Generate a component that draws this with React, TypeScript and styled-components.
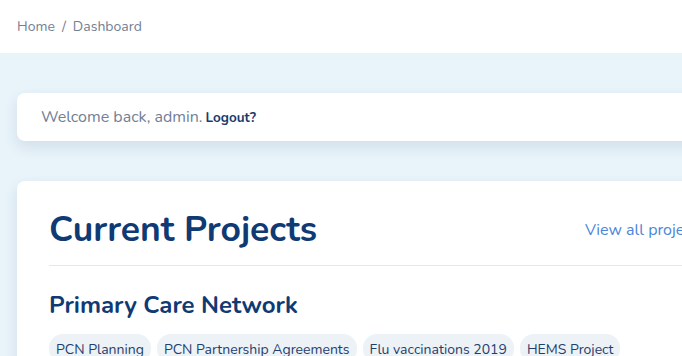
import styled, { createGlobalStyle } from 'styled-components';

const Global = createGlobalStyle`
  html, body {
    margin: 0;
    padding: 0;
    overflow: hidden;
    background: #e8f3fa;
  }
  body {
    font-family: Nunito, Lato, "Open Sans", sans-serif;
  }
`;

const Page = styled.div`
  width: 760px;
  min-height: 356px;
`;

const Header = styled.header`
  height: 53px;
  background: #ffffff;
  display: flex;
  align-items: center;
  padding: 0 17px;
  box-sizing: border-box;
`;

const Crumbs = styled.nav`
  font-size: 14px;
  color: #718096;
  display: flex;
  gap: 7px;
`;

const Main = styled.main`
  padding: 40px 17px 0;
  display: flex;
  flex-direction: column;
  gap: 40px;
`;

const Card = styled.section<{ $pad?: string }>`
  background: #ffffff;
  border-radius: 8px;
  box-shadow: 0 6px 14px rgba(60, 80, 110, 0.12);
  padding: ${(p) => p.$pad || '32px'};
`;

const Welcome = styled.div`
  font-size: 16px;
  color: #718096;
`;

const Logout = styled.a`
  font-size: 13.5px;
  font-weight: 700;
  color: #1a3a6b;
  margin-left: 3px;
`;

const TitleRow = styled.div`
  display: flex;
  justify-content: space-between;
  align-items: center;
  padding-bottom: 13px;
  border-bottom: 1px solid #e2e8f0;
`;

const Title = styled.h1`
  margin: 0;
  font-size: 35.5px;
  line-height: 1.2;
  font-weight: 700;
  color: #0f3a73;
`;

const ViewAll = styled.a`
  font-size: 16px;
  color: #4a86d9;
  margin-right: 6px;
`;

const SubTitle = styled.h2`
  margin: 25px 0 15px;
  font-size: 24px;
  line-height: 1.2;
  font-weight: 700;
  color: #0f3a73;
`;

const Tags = styled.div`
  display: flex;
  gap: 6px;
  flex-wrap: wrap;
`;

const Tag = styled.span`
  background: #edf2f7;
  color: #1f3f6e;
  font-size: 14px;
  border-radius: 14px;
  padding: 6px 7px 4px;
`;

export default function App() {
  const projects = ['PCN Planning', 'PCN Partnership Agreements', 'Flu vaccinations 2019', 'HEMS Project'];
  return (
    <Page>
      <Global />
      <Header>
        <Crumbs>
          <span>Home</span>
          <span>/</span>
          <span>Dashboard</span>
        </Crumbs>
      </Header>
      <Main>
        <Card $pad="13px 24px">
          <Welcome>
            Welcome back, admin.<Logout>Logout?</Logout>
          </Welcome>
        </Card>
        <Card $pad="28px 32px 32px">
          <TitleRow>
            <Title>Current Projects</Title>
            <ViewAll>View all projects</ViewAll>
          </TitleRow>
          <SubTitle>Primary Care Network</SubTitle>
          <Tags>
            {projects.map((p) => (
              <Tag key={p}>{p}</Tag>
            ))}
          </Tags>
        </Card>
      </Main>
    </Page>
  );
}
